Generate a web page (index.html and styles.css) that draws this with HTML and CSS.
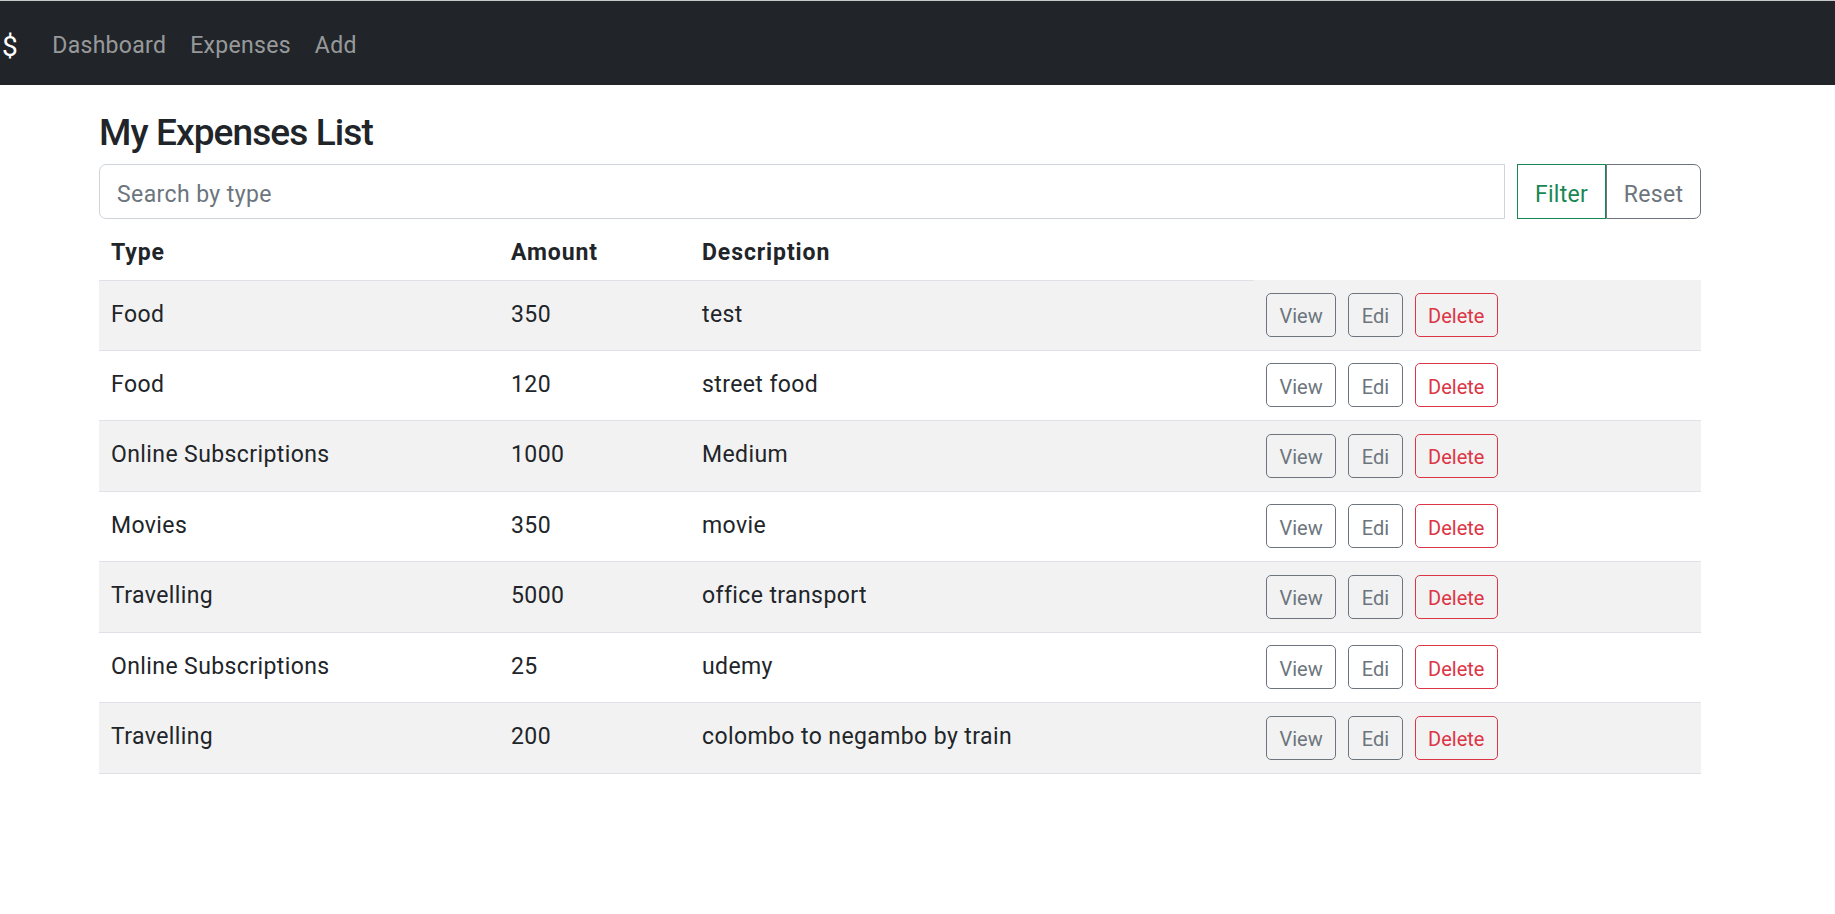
FILE: index.html
```html
<!DOCTYPE html>
<html lang="en">
<head>
<meta charset="utf-8">
<title>My Expenses List</title>
<link rel="stylesheet" href="styles.css">
</head>
<body>
<nav class="navbar">
  <span class="brand">$</span>
  <a class="nav-link" href="#">Dashboard</a>
  <a class="nav-link" href="#">Expenses</a>
  <a class="nav-link" href="#">Add</a>
</nav>
<main class="container">
  <h2 class="title">My Expenses List</h2>
  <div class="search-row">
    <input class="search" type="text" placeholder="Search by type">
    <div class="btn-group">
      <button class="btn btn-filter">Filter</button>
      <button class="btn btn-reset">Reset</button>
    </div>
  </div>
  <table class="table">
    <colgroup>
      <col class="c1"><col class="c2"><col class="c3"><col class="c4">
    </colgroup>
    <thead>
      <tr><th>Type</th><th>Amount</th><th>Description</th></tr>
    </thead>
    <tbody>
      <tr class="odd"><td>Food</td><td>350</td><td>test</td><td class="actions"><div class="acts"><button class="sbtn gray">View</button><button class="sbtn gray">Edi</button><button class="sbtn red">Delete</button></div></td></tr>
      <tr><td>Food</td><td>120</td><td>street food</td><td class="actions"><div class="acts"><button class="sbtn gray">View</button><button class="sbtn gray">Edi</button><button class="sbtn red">Delete</button></div></td></tr>
      <tr class="odd"><td>Online Subscriptions</td><td>1000</td><td>Medium</td><td class="actions"><div class="acts"><button class="sbtn gray">View</button><button class="sbtn gray">Edi</button><button class="sbtn red">Delete</button></div></td></tr>
      <tr><td>Movies</td><td>350</td><td>movie</td><td class="actions"><div class="acts"><button class="sbtn gray">View</button><button class="sbtn gray">Edi</button><button class="sbtn red">Delete</button></div></td></tr>
      <tr class="odd"><td>Travelling</td><td>5000</td><td>office transport</td><td class="actions"><div class="acts"><button class="sbtn gray">View</button><button class="sbtn gray">Edi</button><button class="sbtn red">Delete</button></div></td></tr>
      <tr><td>Online Subscriptions</td><td>25</td><td>udemy</td><td class="actions"><div class="acts"><button class="sbtn gray">View</button><button class="sbtn gray">Edi</button><button class="sbtn red">Delete</button></div></td></tr>
      <tr class="odd"><td>Travelling</td><td>200</td><td>colombo to negambo by train</td><td class="actions"><div class="acts"><button class="sbtn gray">View</button><button class="sbtn gray">Edi</button><button class="sbtn red">Delete</button></div></td></tr>
    </tbody>
  </table>
</main>
</body>
</html>
```
FILE: styles.css
```css
* { box-sizing: border-box; }
html, body {
  margin: 0;
  padding: 0;
  background: #fff;
  font-family: Roboto, "Liberation Sans", sans-serif;
  font-size: 23px;
  color: #212529;
}
.navbar {
  display: flex;
  align-items: center;
  height: 85px;
  background: #212529;
  border-top: 1px solid #c8c8c8;
  padding: 7px 0 0 2px;
}
.brand {
  color: #fff;
  font-size: 28px;
  line-height: 1;
  margin-right: 23px;
}
.nav-link {
  color: rgba(255,255,255,.55);
  text-decoration: none;
  font-size: 23px;
  padding: 0 11.5px;
  line-height: 34.5px;
  letter-spacing: 0.3px;
}
.nav-link + .nav-link { margin-left: 1px; }
.container {
  width: 1701px;
  padding-left: 99px;
}
.title {
  margin: 25px 0 0;
  font-size: 37px;
  line-height: 45.6px;
  font-weight: 500;
  letter-spacing: -0.9px;
}
.search-row {
  display: flex;
  margin-top: 8.5px;
  height: 55px;
}
.search {
  flex: 1;
  height: 55px;
  border: 1px solid #ced4da;
  border-radius: 7px 0 0 7px;
  padding: 5px 17px 0;
  font-family: inherit;
  font-size: 23px;
  letter-spacing: 0.4px;
  color: #212529;
  outline: none;
}
.search::placeholder { color: #6c757d; }
.btn-group {
  display: flex;
  margin-left: 12px;
}
.btn {
  height: 55px;
  background: #fff;
  font-family: inherit;
  font-size: 23px;
  letter-spacing: 0.3px;
  border: 1px solid;
  padding: 5px 0 0;
}
.btn-filter {
  width: 89px;
  color: #198754;
  border-color: #198754;
  border-radius: 0;
}
.btn-reset {
  width: 95px;
  color: #6c757d;
  border-color: #6c757d;
  border-radius: 0 7px 7px 0;
}
.table {
  width: 1602px;
  border-collapse: collapse;
  margin-top: 3px;
  table-layout: fixed;
}
.c1 { width: 400px; }
.c2 { width: 191px; }
.c3 { width: 564px; }
.c4 { width: 447px; }
.table th {
  text-align: left;
  font-weight: 700;
  padding: 13.5px 12px 9.5px;
  line-height: 34.5px;
  letter-spacing: 0.9px;
  border-bottom: 1px solid #dee2e6;
}
.table td {
  padding: 17px 12px 0;
  line-height: 34.5px;
  vertical-align: top;
  letter-spacing: 0.4px;
  border-bottom: 1px solid #dee2e6;
  white-space: nowrap;
}
.table td.actions {
  padding: 12.75px 12px;
}
.odd td { background: #f2f2f2; }
.acts {
  display: flex;
  gap: 12px;
}
.sbtn {
  height: 44px;
  padding: 3px 12.5px 0;
  font-family: inherit;
  font-size: 20px;
  line-height: 30px;
  letter-spacing: 0;
  background: transparent;
  border: 1px solid;
  border-radius: 5px;
}
.gray { color: #6c757d; border-color: #6c757d; }
.red { color: #dc3545; border-color: #dc3545; }
```
